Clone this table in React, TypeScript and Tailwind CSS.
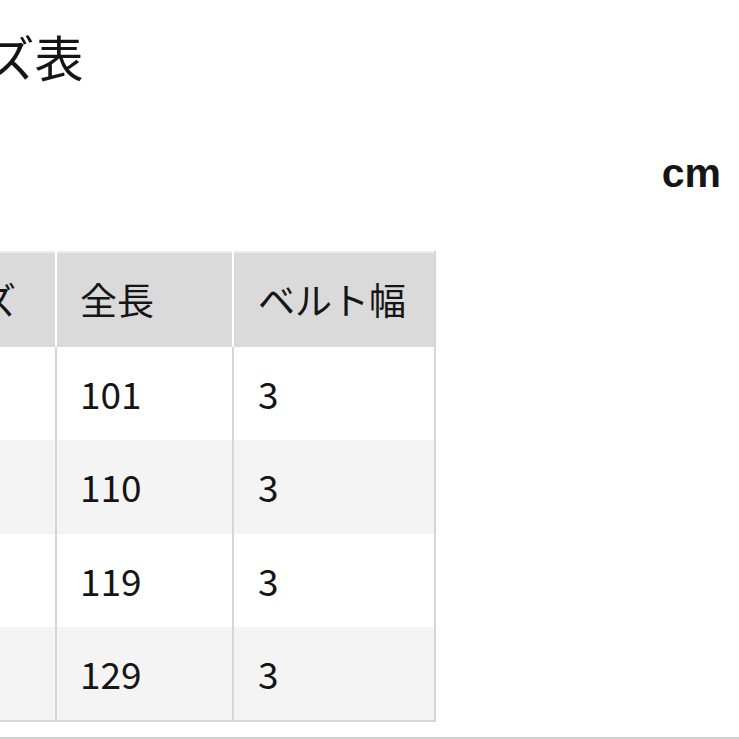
const rows = [
  { size: "S", length: "101", belt: "3", h: "h-[93px]" },
  { size: "M", length: "110", belt: "3", h: "h-[94px]" },
  { size: "L", length: "119", belt: "3", h: "h-[93px]" },
  { size: "XL", length: "129", belt: "3", h: "h-[94px]" },
];

export default function App() {
  return (
    <div
      className="relative h-[739px] w-[739px] overflow-hidden bg-white text-[#151515]"
      style={{ fontFamily: '"Noto Sans CJK JP", "Noto Sans", sans-serif' }}
    >
      <h1 className="ml-[-111px] pt-[32px] text-[49px] font-normal leading-[48px]">サイズ表</h1>

      <div className="mt-[73px] flex justify-end pr-[18px]">
        <span
          className="text-[41px] font-bold leading-[40px]"
          style={{ fontFamily: '"Liberation Sans", Arial, sans-serif' }}
        >
          cm
        </span>
      </div>

      <table className="ml-[-117px] mt-[58px] table-fixed border-collapse text-[37px]">
        <colgroup>
          <col className="w-[173px]" />
          <col className="w-[177px]" />
          <col className="w-[202px]" />
        </colgroup>
        <thead>
          <tr className="h-[95px] bg-[#dadada]">
            <th className="border-t-2 border-r-2 border-t-[#ececec] border-r-white pl-[23px] text-left font-normal">サイズ</th>
            <th className="border-t-2 border-r-2 border-t-[#ececec] border-r-white pl-[23px] text-left font-normal">全長</th>
            <th className="border-t-2 border-r-2 border-t-[#ececec] border-r-[#d6d6d6] pl-[24px] text-left font-normal">ベルト幅</th>
          </tr>
        </thead>
        <tbody>
          {rows.map((r, i) => (
            <tr
              key={r.size}
              className={`${r.h} ${i % 2 === 1 ? "bg-[#f4f4f4]" : "bg-white"} ${i === rows.length - 1 ? "border-b-2 border-b-[#d6d6d6]" : ""}`}
            >
              <td className="border-r-2 border-r-[#d6d6d6] pl-[23px]">{r.size}</td>
              <td className="border-r-2 border-r-[#d6d6d6] pl-[23px]">{r.length}</td>
              <td className="border-r-2 border-r-[#d6d6d6] pl-[24px]">{r.belt}</td>
            </tr>
          ))}
        </tbody>
      </table>

      <div className="absolute bottom-0 left-0 h-[2px] w-full bg-[#cfcfcf]" />
    </div>
  );
}
